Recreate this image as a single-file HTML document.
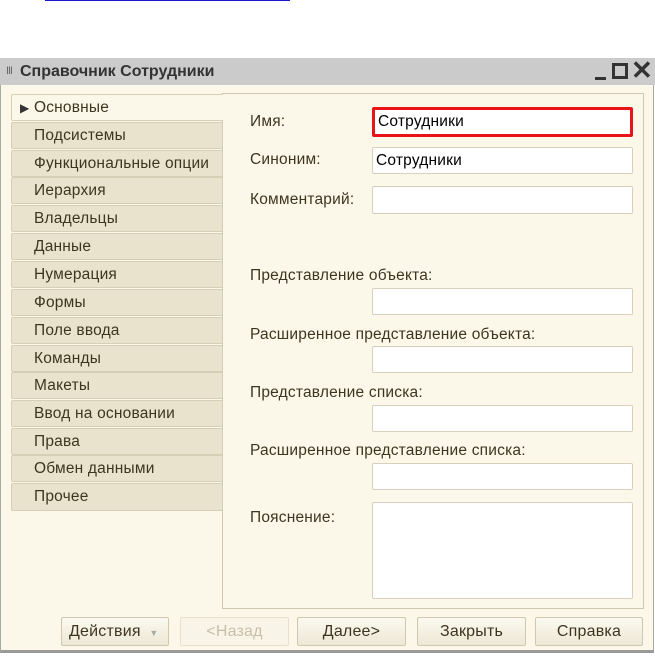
<!DOCTYPE html>
<html><head><meta charset="utf-8"><style>
*{margin:0;padding:0;box-sizing:border-box}
body{width:655px;height:657px;background:#fff;position:relative;overflow:hidden;font-family:"Liberation Sans",sans-serif;font-size:15.5px;letter-spacing:0.2px;color:#3d3520}
.a{position:absolute}
.win{left:0;top:58px;width:654px;height:595px;border:1px solid #a8a8a8;background:#fbf8ea;border-bottom:3px solid #9a9a9a}
.title{left:0;top:58px;width:655px;height:27px;background:#cbcbcb;color:#333;font-weight:bold;font-size:16px;letter-spacing:0;line-height:27px;padding-left:20px}
.tab{left:11px;width:212px;height:27px;background:#e9e3cd;border:1px solid #d6cfb6;border-radius:2px;padding-left:22px;line-height:25px;color:#3d3520}
.panel{left:222px;top:93px;width:422px;height:516px;border:1px solid #cfc8b0}
.inp{left:372px;width:261px;height:27px;background:#fff;border:1px solid #d6d0bc;border-radius:2px;line-height:25px;padding-left:3px;color:#000}
.lbl{left:250px}
.btn{top:617px;height:29px;border:1px solid #cfc8b0;border-radius:2px;background:linear-gradient(#fbf9ef,#ede8d6);text-align:center;line-height:27px;color:#3d3520;font-size:16px}
</style></head><body>
<div class="a" style="left:45px;top:0;width:245px;height:1px;background:#1a1acc"></div>
<div class="a win"></div>
<div class="a title"><span style="position:absolute;left:6px;top:0;font-weight:normal;font-size:10px;color:#666">Ⅲ</span>Справочник Сотрудники</div>
<div class="a" style="left:595px;top:77px;width:11px;height:3px;background:#333"></div>
<div class="a" style="left:612px;top:63px;width:16px;height:16px;border:3px solid #333"></div>
<div class="a" style="left:631px;top:55px;font-size:26px;font-weight:bold;color:#333;letter-spacing:0">✕</div>
<div class="a panel"></div>
<div class="a tab" style="top:94px;background:#fbf8ea;border-right-color:#fbf8ea;width:213px;padding-left:8px"><span style="font-size:12px;color:#333">▶</span> Основные</div>
<div class="a tab" style="top:122px">Подсистемы</div>
<div class="a tab" style="top:150px">Функциональные опции</div>
<div class="a tab" style="top:177px">Иерархия</div>
<div class="a tab" style="top:205px">Владельцы</div>
<div class="a tab" style="top:233px">Данные</div>
<div class="a tab" style="top:261px">Нумерация</div>
<div class="a tab" style="top:289px">Формы</div>
<div class="a tab" style="top:317px">Поле ввода</div>
<div class="a tab" style="top:345px">Команды</div>
<div class="a tab" style="top:372px">Макеты</div>
<div class="a tab" style="top:400px">Ввод на основании</div>
<div class="a tab" style="top:428px">Права</div>
<div class="a tab" style="top:455px">Обмен данными</div>
<div class="a tab" style="top:483px;height:28px">Прочее</div>
<div class="a lbl" style="top:113px">Имя:</div>
<div class="a inp" style="top:107px;height:30px;border:3px solid #e8141a;line-height:24px;width:261px">Сотрудники</div>
<div class="a lbl" style="top:151px">Синоним:</div>
<div class="a inp" style="top:147px">Сотрудники</div>
<div class="a lbl" style="top:191px">Комментарий:</div>
<div class="a inp" style="top:186px;height:28px"></div>
<div class="a lbl" style="top:267px">Представление объекта:</div>
<div class="a inp" style="top:288px"></div>
<div class="a lbl" style="top:326px">Расширенное представление объекта:</div>
<div class="a inp" style="top:346px"></div>
<div class="a lbl" style="top:384px">Представление списка:</div>
<div class="a inp" style="top:405px"></div>
<div class="a lbl" style="top:442px">Расширенное представление списка:</div>
<div class="a inp" style="top:463px"></div>
<div class="a lbl" style="top:509px">Пояснение:</div>
<div class="a inp" style="top:502px;height:97px"></div>
<div class="a btn" style="left:61px;width:108px;text-align:left;padding-left:7px">Действия <span style="color:#aaa;font-size:9px;margin-left:4px">▼</span></div>
<div class="a btn" style="left:180px;width:109px;color:#c8bfa8;border-color:#e6e0cc;background:#f8f5e8">&lt;Назад</div>
<div class="a btn" style="left:297px;width:109px">Далее&gt;</div>
<div class="a btn" style="left:417px;width:109px">Закрыть</div>
<div class="a btn" style="left:535px;width:108px">Справка</div>
</body></html>
